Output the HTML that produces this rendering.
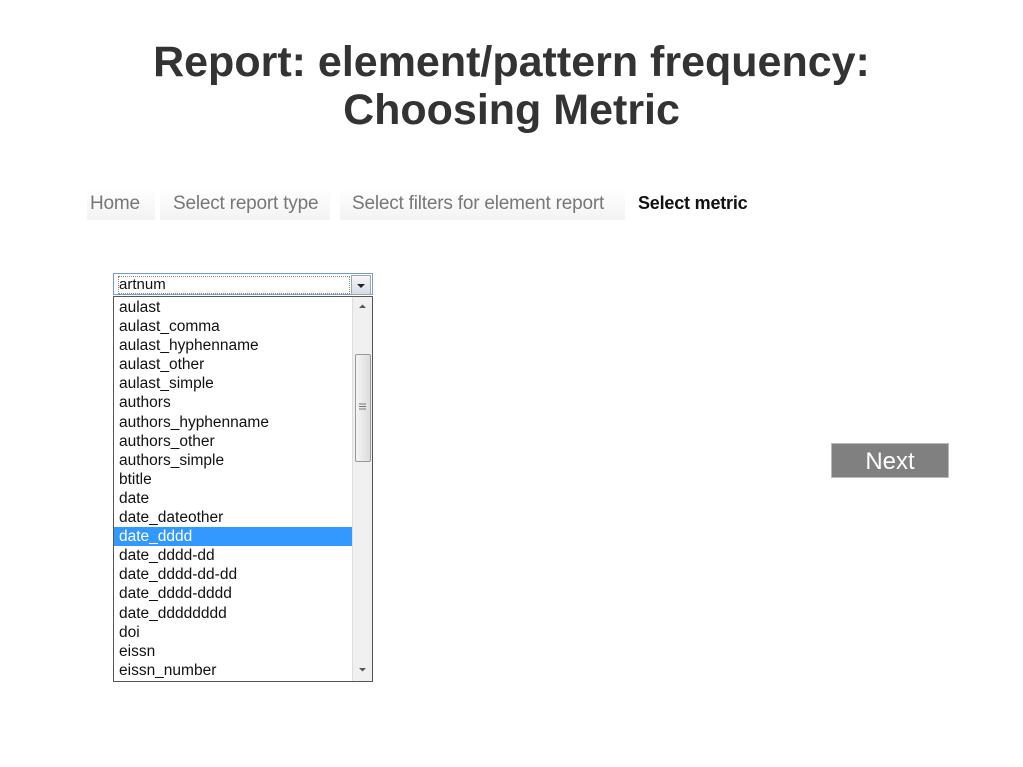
<!DOCTYPE html>
<html><head><style>
body{margin:0;width:1023px;height:767px;background:#fff;position:relative;font-family:"Liberation Sans",Arial,sans-serif;overflow:hidden}
.t{position:absolute;left:0;width:1023px;top:38px;text-align:center;font-weight:bold;font-size:43px;line-height:48px;color:#333}
.bc{position:absolute;top:193px;font-size:19px;color:#777;letter-spacing:-0.2px}
.bg{position:absolute;top:188px;height:32px;background:linear-gradient(#fff,#f3f3f3)}
.sel{position:absolute;left:113px;top:273px;height:22px;border:1px solid #7a9cc8;box-sizing:border-box;width:260px}
.sel span{position:absolute;left:4px;top:2px;font-size:15px;color:#111;border:1px dotted #888;width:230px;height:16px;line-height:16px}
.arr{position:absolute;right:1px;top:1px;width:18px;height:18px;background:linear-gradient(#f4f6f9,#d8dde5);border:1px solid #9aa}
.list{position:absolute;left:113px;top:296px;width:260px;height:386px;border:1px solid #555;box-sizing:border-box;overflow:hidden;padding-top:1px}
.it{height:19.1px;line-height:19px;font-size:15.5px;color:#111;padding-left:5px;width:233px}
.hl{background:#3399ff;color:#fff}
.sb{position:absolute;right:0;top:0;width:19px;height:100%;background:#f0f0f0;border-left:1px solid #ddd}
.th{position:absolute;left:2px;top:57px;width:14px;height:106px;border:1px solid #999;border-radius:2px;background:linear-gradient(90deg,#f5f5f5,#dcdcdc)}
.next{position:absolute;left:831px;top:443px;width:118px;height:35px;background:#808080;border:1px solid #bbb;color:#fff;font-size:24px;text-align:center;line-height:35px;box-sizing:border-box}
</style></head><body>
<div class="t">Report: element/pattern frequency:<br>Choosing Metric</div>
<div class="bg" style="left:87px;width:68px"></div>
<div class="bg" style="left:160px;width:170px"></div>
<div class="bg" style="left:340px;width:285px"></div>
<div class="bc" style="left:90px">Home</div>
<div class="bc" style="left:173px">Select report type</div>
<div class="bc" style="left:352px">Select filters for element report</div>
<div class="bc" style="left:638px;color:#111;font-weight:bold;font-size:18px;top:193px;letter-spacing:-0.2px">Select metric</div>
<div class="sel"><span>artnum</span><div class="arr"><svg width="18" height="18"><path d="M5 8h8l-4 4z" fill="#222"/></svg></div></div>
<div class="list">
<div class="it">aulast</div><div class="it">aulast_comma</div><div class="it">aulast_hyphenname</div><div class="it">aulast_other</div><div class="it">aulast_simple</div><div class="it">authors</div><div class="it">authors_hyphenname</div><div class="it">authors_other</div><div class="it">authors_simple</div><div class="it">btitle</div><div class="it">date</div><div class="it">date_dateother</div><div class="it hl">date_dddd</div><div class="it">date_dddd-dd</div><div class="it">date_dddd-dd-dd</div><div class="it">date_dddd-dddd</div><div class="it">date_dddddddd</div><div class="it">doi</div><div class="it">eissn</div><div class="it">eissn_number</div>
<div class="sb"><svg style="position:absolute;left:5px;top:6px" width="9" height="6"><path d="M1 5l3.5-3.5L8 5z" fill="#555"/></svg><div class="th"><svg style="position:absolute;left:3px;top:48px" width="8" height="8"><path d="M0 1h7M0 3.5h7M0 6h7" stroke="#777"/></svg></div><svg style="position:absolute;left:5px;top:370px" width="9" height="6"><path d="M1 1l3.5 3.5L8 1z" fill="#555"/></svg></div>
</div>
<div class="next">Next</div>
</body></html>
